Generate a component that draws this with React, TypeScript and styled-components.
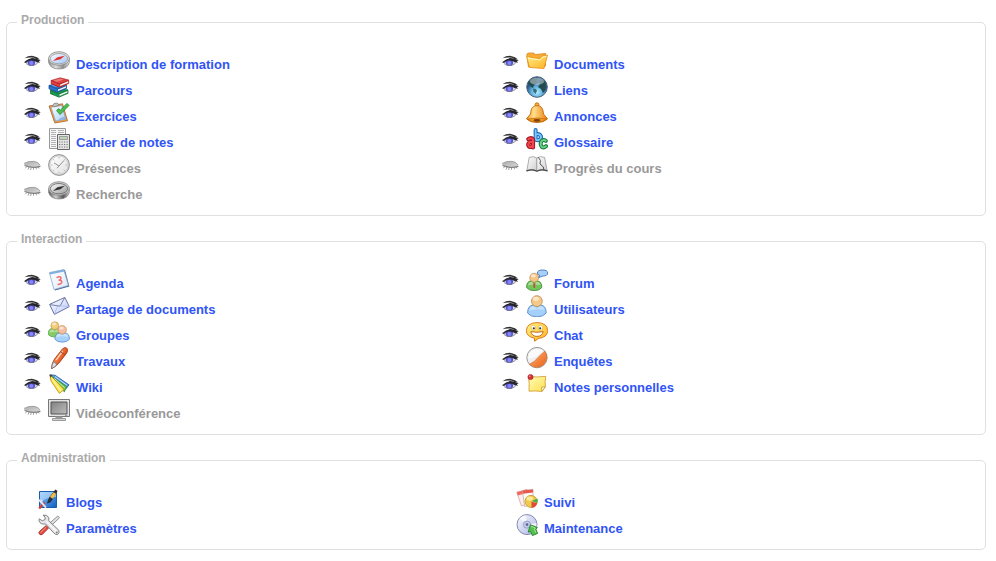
import React from "react";
import styled, { createGlobalStyle } from "styled-components";

const GlobalStyle = createGlobalStyle`
  body {
    margin: 0;
    background: #fff;
    font-family: "Liberation Sans", Arial, sans-serif;
  }
`;

const Page = styled.main`
  display: flex;
  flex-direction: column;
  gap: 16px;
  padding: 13px 10px 11px 6px;
`;

const Section = styled.fieldset`
  margin: 0;
  min-width: 0;
  padding: 16px 12px 11px 10px;
  border: 1px solid #e0e0e0;
  border-radius: 5px;
`;

const SectionTitle = styled.legend`
  padding: 0 4px 5px;
  font-size: 12px;
  font-weight: bold;
  line-height: 14px;
  color: #aaa;
`;

const ToolGrid = styled.div`
  display: grid;
  grid-template-columns: 1fr 1fr;
`;

const ToolList = styled.ul<{ $inset: number }>`
  margin: 0;
  padding: 0 0 0 ${(p) => p.$inset}px;
  list-style: none;
`;

const ToolRow = styled.li`
  display: flex;
  align-items: flex-start;
  height: 26px;
`;

const EyeButton = styled.button`
  flex: none;
  width: 17px;
  height: 12px;
  margin: 7px 7px 0 0;
  padding: 0;
  border: 0;
  background: none;
  cursor: pointer;
`;

const ToolLink = styled.a<{ $hidden: boolean }>`
  display: flex;
  gap: 6px;
  padding-top: 2px;
  font-size: 13px;
  font-weight: bold;
  line-height: 15px;
  color: ${(p) => (p.$hidden ? "#999" : "#3054f5")};
  text-decoration: none;
`;

const ToolName = styled.span`
  padding-top: 7px;
`;

const Drawing = styled.svg`
  display: block;
  flex: none;
`;

const Gradient = ({ id, from, to }: { id: string; from: string; to: string }) => (
  <linearGradient id={id} x1="0" y1="0" x2="1" y2="1">
    <stop offset="0" stopColor={from} />
    <stop offset="1" stopColor={to} />
  </linearGradient>
);

const OpenEye = () => (
  <Drawing width="17" height="12" viewBox="0 0 17 12" aria-hidden="true">
    <path d="M1.5 8Q7 3 14.5 6.5Q12 11 7.5 11Q4 11 1.5 8Z" fill="#dcdce8" />
    <circle cx="7.4" cy="7.4" r="3.7" fill="#5352c4" />
    <circle cx="7.4" cy="8" r="2" fill="#8486ff" />
    <path d="M.5 3.2Q4 .6 9 .9Q13.5 1.4 16 4.4L12.5 4Q9.5 2.4 6.5 2.6Q3 2.6.5 3.2Z" fill="#333" />
    <path d="M0 7.3Q4.5 3.4 8.5 3.1Q12.5 3.2 16.8 5.4L14.6 6.1L16.2 7.5L13.4 7.6Q9.7 4.7 6 5.6Q3.6 6.2 2 8L0 7.3Z" fill="#25252b" />
    <path d="M2 8.6Q7.5 12.6 13.5 8.4" fill="none" stroke="#888" strokeWidth=".8" />
  </Drawing>
);

const ClosedEye = () => (
  <Drawing width="17" height="12" viewBox="0 0 17 12" aria-hidden="true">
    <Gradient id="g-lid" from="#aaa" to="#ddd" />
    <path d="M0 5Q4 1.6 10.4 2.2Q15.5 3.4 16.5 7.2Q13 9.6 7 9Q2 8.6 0 5Z" fill="url(#g-lid)" />
    <path d="M0 4.4Q5 1.8 10 2.3Q14.5 3 16 6" fill="none" stroke="#999" strokeWidth=".8" />
    <path d="M.5 6.6Q8 9.6 16.4 7.4" fill="none" stroke="#808080" strokeWidth="1.1" />
    <path d="M2.5 7.5L1.5 9.2M5 8L4 10.6M7.2 8.5L6.6 11M9.5 8.5V10.8M12 8L12.5 10.3M14 7.7L15 9.4" fill="none" stroke="#888" strokeWidth=".8" />
  </Drawing>
);

const Compass = ({ face, light, dark, needle, id }: { face: string; light: string; dark: string; needle: string; id: string }) => (
  <>
    <Gradient id={id} from="#fff" to={face} />
    <linearGradient id={`${id}-side`}>
      <stop offset="0" stopColor={dark} />
      <stop offset=".35" stopColor={light} />
      <stop offset=".7" stopColor={dark} />
      <stop offset="1" stopColor={light} />
    </linearGradient>
    <path d="M.6 9V12.4Q2.2 19 11 19Q19.8 19 21.4 12.4V8Z" fill={`url(#${id}-side)`} stroke="#888" strokeWidth=".7" />
    <ellipse cx="11" cy="8.5" rx="10.4" ry="6.8" fill={light} stroke="#888" strokeWidth=".8" />
    <ellipse cx="11" cy="8.7" rx="8.7" ry="5.2" fill={`url(#${id})`} stroke={dark} strokeWidth=".7" />
    <path d="M4.8 11L9.5 7.2L16.8 5.7L12.5 9.2Z" fill={needle} />
  </>
);

const Book = ({ x, y, cover, edge }: { x: number; y: number; cover: string; edge: string }) => (
  <g transform={`translate(${x} ${y})`}>
    <path d="M0 2.6L8.5 6.2L17.5 2.6V5.6L8.5 9.4L0 6Z" fill={cover} stroke={edge} strokeWidth=".8" />
    <path d="M9 6.6L17 3.4V4.9L9 8.2Z" fill="#f4f4ee" />
    <path d="M0 2.6L9 0L17.5 2.2L8.5 6.2Z" fill={cover} stroke={edge} strokeWidth=".6" />
    <path d="M2 2.6L9 .7L12.5 1.7L6 4.1Z" fill="#fff" opacity=".3" />
  </g>
);

const Person = ({ x, y, scale, body, edge, head }: { x: number; y: number; scale: number; body: string; edge: string; head: string }) => (
  <g transform={`translate(${x} ${y}) scale(${scale})`}>
    <path d="M.4 17.5Q.4 10 6 9.6H13Q18.6 10 18.6 17.5Q16 21.2 9.5 21.2Q3 21.2.4 17.5Z" fill={body} stroke={edge} strokeWidth=".9" />
    <path d="M2 15Q3 10.8 6.5 10.8L9.5 13L12.5 10.8Q16 10.8 17 14.6Q10 13 2 15Z" fill="#fff" opacity=".4" />
    <circle cx="9.5" cy="5.8" r="5.3" fill={head} stroke="#bd8a4c" strokeWidth=".8" />
    <ellipse cx="8.5" cy="3.6" rx="3" ry="2" fill="#fff" opacity=".55" />
  </g>
);

const icons: Record<string, React.ReactNode> = {
  compass: <Compass id="g-compass" face="#9dc3fa" light="#dedede" dark="#8e8e8e" needle="#e0302a" />,
  search: <Compass id="g-search" face="#999" light="#cfcfcf" dark="#555" needle="#333" />,
  books: (
    <>
      <Book x={2.5} y={11.7} cover="#1c9a50" edge="#0b6a33" />
      <Book x={1} y={6.8} cover="#2a72cc" edge="#174d92" />
      <Book x={3.2} y={1.8} cover="#e0403e" edge="#a81c24" />
    </>
  ),
  exercises: (
    <>
      <Gradient id="g-paper" from="#fff" to="#a9d2f6" />
      <path d="M1 4L14.5 1.8L19.5 18.8L6.8 21Z" fill="#f0a04a" stroke="#a8642a" strokeWidth=".8" />
      <path d="M3 5.2L13.8 3.4L17.8 17.2L7.6 19Z" fill="url(#g-paper)" stroke="#7594bb" strokeWidth=".6" />
      <path d="M4.6 4L6 1.5L9.5 1L11 3.3L5.6 5Z" fill="#c4c4c4" stroke="#777" strokeWidth=".7" />
      <path d="M8.6 8.6L12 12.6L21 3.4L19 1.4L12.2 8.4L10.6 6.6Z" fill="#4cc24e" stroke="#1f8430" strokeWidth=".8" />
      <path d="M12.5 16L18 14L16.5 17.5L9 19Z" fill="#8fb6e4" />
    </>
  ),
  gradebook: (
    <>
      <path d="M1.5.5H17.5V20.5H1.5Z" fill="#f6f6f6" stroke="#999" />
      <path d="M3 2.5H8M10 2.5H16M3 4.5H8M10 4.5H16M3 6.5H8M3 8.5H8M3 10.5H8M3 12.5H8M3 14.5H8M3 16.5H8M3 18.5H8" stroke="#b2b2b2" />
      <path d="M9.5 6.5H21.5V21.5H9.5Z" fill="#e4e4e4" stroke="#666" />
      <path d="M11.5 8.5H19.5V11.5H11.5Z" fill="#bdd4b8" stroke="#888" strokeWidth=".7" />
      <path d="M11 14H20M11 16.5H20M11 19H20" stroke="#777" strokeWidth="1.2" strokeDasharray="1.2 1.3" />
    </>
  ),
  clock: (
    <>
      <Gradient id="g-clock" from="#fff" to="#e2e2e2" />
      <circle cx="11" cy="11" r="10.4" fill="#ddd" stroke="#888" strokeWidth=".9" />
      <circle cx="11" cy="11" r="9" fill="url(#g-clock)" stroke="#c4c4c4" strokeWidth=".6" />
      <path d="M11 3V4.5M11 17.5V19M3 11H4.5M17.5 11H19M5.3 5.3L6.3 6.3M15.7 15.7L16.7 16.7M16.7 5.3L15.7 6.3M5.3 16.7L6.3 15.7" stroke="#aaa" strokeWidth=".8" />
      <path d="M6 8.8L11 12L16 6.5M9 14.2L11 12" fill="none" stroke="#888" strokeWidth=".9" />
    </>
  ),
  folder: (
    <>
      <Gradient id="g-folder" from="#fff08a" to="#ffb020" />
      <path d="M2.5 17L.8 4.5Q1 3 3 3H7.5L9.5 4.6L19.5 3.4V16Z" fill="#f8ab35" stroke="#d98522" strokeWidth=".8" />
      <path d="M.6 6.6L13.5 8.6L16.5 5.6L21.5 5L18 18.6L3.5 17.4Z" fill="url(#g-folder)" stroke="#e58f1c" strokeWidth=".8" />
      <path d="M2 8L14 10L17 7L20.4 6.4" fill="none" stroke="#fffbd0" strokeWidth=".9" />
    </>
  ),
  globe: (
    <>
      <radialGradient id="g-globe" cx=".5" cy=".75">
        <stop offset="0" stopColor="#b5efff" />
        <stop offset=".6" stopColor="#5aa8d8" />
        <stop offset="1" stopColor="#2c5a86" />
      </radialGradient>
      <circle cx="11" cy="11" r="10.3" fill="url(#g-globe)" stroke="#4d6378" />
      <path d="M2 7L6 2.5L12 2L10 5L12 7L8 9L7 12L4 10ZM13 5L17 4L20 8L19.5 14L17 17L15 13L12 11L14 8Z" fill="#244c50" />
      <path d="M7 12.4L10 13L11 15L9.4 18L7.4 15.6Z" fill="#35707a" />
      <ellipse cx="11" cy="5.3" rx="7" ry="3.6" fill="#fff" opacity=".42" />
    </>
  ),
  bell: (
    <>
      <linearGradient id="g-bell">
        <stop offset="0" stopColor="#f39a1e" />
        <stop offset=".35" stopColor="#ffe08a" />
        <stop offset="1" stopColor="#ee7d0c" />
      </linearGradient>
      <circle cx="11" cy="2.8" r="2" fill="#ffae22" stroke="#b8640a" strokeWidth=".8" />
      <path d="M4.5 12Q4.8 3.6 11 3.6Q17.2 3.6 17.5 12L21.5 16.8Q18 20.6 11 20.6Q4 20.6 .5 16.8Z" fill="url(#g-bell)" stroke="#c06a10" strokeWidth=".9" />
      <path d="M1.2 17.2Q11 14.6 20.8 17.2Q17 20 11 20Q5 20 1.2 17.2Z" fill="#f59a20" stroke="#b8640a" strokeWidth=".7" />
      <ellipse cx="11" cy="18.3" rx="3.4" ry="1.4" fill="#7d4210" />
    </>
  ),
  glossary: (
    <g fill="none" strokeLinecap="round" strokeLinejoin="round">
      <path d="M9.6 2V11.6M9.6 7Q11.5 5.4 14 6.8Q15.8 8.6 14.4 11Q12.4 13 9.6 11.6" stroke="#1a66b4" strokeWidth="4" />
      <path d="M9.6 2V11.6M9.6 7Q11.5 5.4 14 6.8Q15.8 8.6 14.4 11Q12.4 13 9.6 11.6" stroke="#7ac8ff" strokeWidth="1.9" />
      <path d="M2.4 11.2Q5 9 7 11.4V19.4M7 14H3.5Q1 17 3.3 18.8Q6 19.4 7 17" stroke="#a5182a" strokeWidth="4.2" />
      <path d="M2.4 11.2Q5 9 7 11.4V19.4M7 14H3.5Q1 17 3.3 18.8Q6 19.4 7 17" stroke="#f2484c" strokeWidth="2" />
      <path d="M19.8 12.8Q17 10.9 15.2 13.6Q13.8 17 16 19Q18 20.2 20 18.2" stroke="#1b7a44" strokeWidth="4" />
      <path d="M19.8 12.8Q17 10.9 15.2 13.6Q13.8 17 16 19Q18 20.2 20 18.2" stroke="#6bd884" strokeWidth="1.8" />
    </g>
  ),
  openBook: (
    <>
      <Gradient id="g-book" from="#fff" to="#cfcfcf" />
      <path d="M3.2 3.4Q8 1.6 10.8 4V17Q6 14.6 .8 17Z" fill="url(#g-book)" stroke="#999" strokeWidth=".8" />
      <path d="M10.8 4Q14 1.6 18.6 3.4L21.2 17Q16 14.6 10.8 17Z" fill="url(#g-book)" stroke="#999" strokeWidth=".8" />
      <path d="M12.2 3.2L14.4 6.4L14 10L17.4 13L17.8 16" fill="none" stroke="#555" />
      <path d="M.4 17Q6 14.8 10.8 17.2Q16 14.8 21.6 17" fill="none" stroke="#444" strokeWidth="1.2" />
    </>
  ),
  agenda: (
    <>
      <Gradient id="g-agenda" from="#fff" to="#dcebfb" />
      <path d="M2.4 4L17 .8L21.4 17.4L7 21.6Z" fill="#466a9c" />
      <path d="M1.4 3.6L15.8.6L20.4 16.4L6 20.6Z" fill="url(#g-agenda)" stroke="#8fa5c5" strokeWidth=".8" />
      <path d="M1.4 3.6L15.8.6L16.3 2.6L2.1 5.6Z" fill="#7faee0" />
      <path d="M8.5 8.6Q12.6 6.8 13 9Q13 10.8 10.6 11.2Q14 11 13.8 13.4Q13.2 15.4 9.6 15.4" fill="none" stroke="#f26d6d" strokeWidth="1.5" />
    </>
  ),
  envelope: (
    <>
      <Gradient id="g-mail" from="#fff" to="#bccbfa" />
      <path d="M1.6 9.4L16.8 2.4L21.3 11.6L6.4 19.4Z" fill="url(#g-mail)" stroke="#6a74a6" />
      <path d="M1.9 9.6L12 11.2L16.6 2.8" fill="none" stroke="#6a74a6" strokeWidth=".9" />
      <path d="M6.5 19L9.6 11M21 11.5L12.4 10.8" fill="none" stroke="#a9b3dc" strokeWidth=".7" />
    </>
  ),
  group: (
    <>
      <Person x={-0.2} y={0.4} scale={0.74} body="#86cc62" edge="#449a30" head="#f3cc76" />
      <Person x={6.6} y={4.2} scale={0.8} body="#a6d1fa" edge="#5085be" head="#f6bd9e" />
    </>
  ),
  pen: (
    <>
      <linearGradient id="g-pen" x1="0" y1="0" x2="1" y2=".7">
        <stop offset=".2" stopColor="#ffb27c" />
        <stop offset=".7" stopColor="#e5531c" />
      </linearGradient>
      <path d="M3.6 21.6Q3.6 16.6 6.5 12L14.6 1.8Q17-.4 19 1.4Q20.4 3.4 18.6 6.2L10.8 16.2Q7.6 19.8 3.6 21.6Z" fill="url(#g-pen)" stroke="#a33f18" strokeWidth=".9" />
      <path d="M3.6 21.6Q3.8 17.8 5.6 14.6L9 17.4Q6.8 20 3.6 21.6Z" fill="#dfe2ec" stroke="#666" strokeWidth=".7" />
      <path d="M8.2 13L14.8 4.2" stroke="#ffe0c8" strokeWidth="1.2" />
      <path d="M13 5L17 8" stroke="#8c4d3c" />
    </>
  ),
  wiki: (
    <g strokeWidth=".8">
      <path d="M2 2L7 2.2L21 11.8L18.4 15.4L5 6Z" fill="#4f9ae8" stroke="#2b5b9a" />
      <path d="M2 2L6 5L18.6 13.4L16.4 18.8L5 8Z" fill="#5fc445" stroke="#2f882c" />
      <path d="M2 2L6.5 6.4L16 16.6L11.4 20.4L3 8Z" fill="#ffe650" stroke="#b38a12" />
      <path d="M4 6L13 18M6.4 5.4L16.8 15M7 3.6L19 12.4" stroke="#fff" strokeWidth=".9" opacity=".8" />
      <path d="M1.4 1.4L4.6 1.8L2.4 4.8Z" fill="#444" />
    </g>
  ),
  monitor: (
    <>
      <Gradient id="g-screen" from="#828282" to="#bdbdbd" />
      <path d="M.5.5H21.5V17.5H.5Z" fill="#e4e4e4" stroke="#777" />
      <path d="M3 3H19V15H3Z" fill="url(#g-screen)" stroke="#555" />
      <path d="M7.5 17.5H14.5V19.5H7.5Z" fill="#999" />
      <path d="M4.5 19.5H17.5V21.5H4.5Z" fill="#d4d4d4" stroke="#888" strokeWidth=".8" />
      <path d="M17 16.3H19.5" stroke="#777" strokeWidth=".8" />
    </>
  ),
  forum: (
    <>
      <Person x={0.2} y={3.8} scale={0.84} body="#73c65b" edge="#31832a" head="#f5c586" />
      <path d="M7.2 13.6L8.2 14.8L9.4 13.6L9 19H7.6Z" fill="#c9483c" />
      <path d="M11.4 4Q11.4 1 16.6 1Q21.7 1 21.7 4Q21.7 7 16.6 7.1L12.8 8.6L13.6 6.3Q11.4 5.6 11.4 4Z" fill="#a9d0fb" stroke="#3f74ae" strokeWidth=".9" />
    </>
  ),
  user: <Person x={1.2} y={0.2} scale={1.02} body="#a4d0fb" edge="#5c8cc4" head="#f4c888" />,
  chat: (
    <>
      <Gradient id="g-chat" from="#fff78a" to="#ffb31a" />
      <path d="M11 1.6Q21.6 2 21.6 9.5Q21.4 16.6 12.6 17.4L8.6 20.2L8.4 17.2Q.4 15.6.4 9.5Q.8 2 11 1.6Z" fill="url(#g-chat)" stroke="#dd7a1c" />
      <ellipse cx="7.4" cy="6.8" rx="2.2" ry="2.6" fill="#fff" stroke="#d9a02c" strokeWidth=".5" />
      <ellipse cx="14.6" cy="6.8" rx="2.2" ry="2.6" fill="#fff" stroke="#d9a02c" strokeWidth=".5" />
      <circle cx="7.8" cy="7.3" r="1.1" fill="#333" />
      <circle cx="14.2" cy="7.3" r="1.1" fill="#333" />
      <path d="M4.8 10.6Q11 12 17.2 10.6Q16 15.4 11 15.4Q6 15.4 4.8 10.6Z" fill="#fff" stroke="#b8641c" strokeWidth=".9" />
    </>
  ),
  survey: (
    <>
      <Gradient id="g-survey" from="#f9b27a" to="#ee6012" />
      <circle cx="11" cy="10.6" r="10.2" fill="#efefef" stroke="#999" />
      <path d="M18.8 4.2A10.1 10.1 0 0 1 3.4 17.2Q9 14.8 12 10.4Q15 7.4 18.8 4.2Z" fill="url(#g-survey)" stroke="#d3692b" strokeWidth=".6" />
      <path d="M2.2 12Q2 4 10 2.3Q15 1.5 17.5 3.5L10.5 9.5Z" fill="#fff" opacity=".7" />
    </>
  ),
  note: (
    <>
      <Gradient id="g-note" from="#fffcb4" to="#ffdf52" />
      <path d="M2.5 3.6Q11 4.4 19.8 3.4Q18.6 9 19.4 13.6L16 18.4Q9 17.6 3 18.2Q3.6 10 2.5 3.6Z" fill="url(#g-note)" stroke="#d2a23a" strokeWidth=".9" />
      <path d="M19.4 13.6L15.4 14.2L16 18.4Z" fill="#fffbd2" stroke="#bd8d25" strokeWidth=".7" />
      <circle cx="4.5" cy="4" r="2.6" fill="#d8323a" stroke="#a3202a" strokeWidth=".6" />
      <circle cx="3.8" cy="3.2" r=".8" fill="#ff9999" />
    </>
  ),
  blog: (
    <>
      <Gradient id="g-blog" from="#8fc8ff" to="#0d5cc0" />
      <path d="M1.5 3.5H18.5V19.5H1.5Z" fill="url(#g-blog)" stroke="#1a5ca8" />
      <path d="M2 4H18V9Q10 9 2 14Z" fill="#d4ebff" opacity=".5" />
      <path d="M17.4 1.4L19.6 3L14.6 10.6L11.8 8.8Z" fill="#2b2d30" />
      <path d="M15.6 4.2L18 5.8L14.8 10.8L12 9Z" fill="#f5bc3c" />
      <path d="M11.4 8.8L15 11L12.4 14.4L8.8 15.6Z" fill="#26303c" />
      <path d="M6.6 14.6L1.2 20.6" stroke="#d04038" strokeWidth="2.2" />
      <path d="M.6 11.6L2.6 13.8L4.4 12.2M3 13.8L8 19.6" fill="none" stroke="#e6e6ee" strokeWidth="1.8" />
    </>
  ),
  settings: (
    <>
      <path d="M19.8 2L21.5 3.8L12.4 12.4L10.2 10.4Z" fill="#e2e2e2" stroke="#777" strokeWidth=".8" />
      <path d="M8.2 11.6L10.6 14L4.2 20.6Q1.8 21.6.8 19Q.8 17.6 3.2 15.8Z" fill="#e04c42" stroke="#9a2a28" strokeWidth=".8" />
      <path d="M2.5 18.6L8.4 13" stroke="#ff9a8b" />
      <path d="M5 1.2Q9 .4 10.8 3.5L10.8 6.8L20.8 16.2Q22 19 19.5 20.6Q17.7 21 15.6 18.8L7.6 10Q2.5 10.8 1 6.9L1.2 4.8L4.3 6.8L7.2 5.4L7 3Z" fill="#e6e6ea" stroke="#777" strokeWidth=".9" />
      <path d="M8.6 7.6L18 17" stroke="#fff" strokeWidth="1.2" />
      <circle cx="18.8" cy="18.4" r="1" fill="#888" />
    </>
  ),
  tracking: (
    <>
      <path d="M.8 4.2L11 1.4L15 15L5.4 18Z" fill="#fbeeec" stroke="#d4a8a4" strokeWidth=".8" />
      <path d="M.8 4.2L11 1.4L12 4.6L1.8 7.4Z" fill="#ef6a60" />
      <path d="M6.4 2.6L17 1.4V16L8.6 18.6Z" fill="#fbfaf8" stroke="#c9aca8" strokeWidth=".8" />
      <path d="M6.4 2.6L17 1.4V4.6L6.8 5.8Z" fill="#e8584f" />
      <circle cx="15" cy="13.4" r="6" fill="#efcb4c" stroke="#bf9426" strokeWidth=".8" />
      <ellipse cx="13.8" cy="10.6" rx="3.2" ry="2.2" fill="#fff3b0" opacity=".8" />
      <path d="M15.6 13L21.4 10.6Q22.2 13 21.2 15Z" fill="#4eae4d" />
      <path d="M15.4 13.8L21.4 15.2Q19.6 19.8 15.6 19.8Z" fill="#e04a38" />
    </>
  ),
  disc: (
    <>
      <Gradient id="g-disc" from="#fafaff" to="#aab4e4" />
      <circle cx="11" cy="10.6" r="10" fill="url(#g-disc)" stroke="#858bb0" />
      <path d="M11 10.6L3.4 4.4Q6 1.4 10 1.2ZM11 10.6L20.4 9V13Z" fill="#fff" opacity=".7" />
      <circle cx="11" cy="10.6" r="3.6" fill="#c4c9ef" stroke="#8d94c4" strokeWidth=".8" />
      <circle cx="11" cy="10.6" r="1.3" fill="#5a6188" />
      <path d="M14.4 10.8L21.4 13.6L19.8 15L21.6 19.4L16.4 21.6L14.6 17.4L12.2 18.2Z" fill="#55c04c" stroke="#1f8229" strokeWidth=".9" />
      <path d="M14.8 12.2L19.4 14L18.4 15.2L19.8 18.6" fill="none" stroke="#b2eaa4" strokeWidth=".9" />
    </>
  ),
};

type Tool = { name: string; icon: string; hidden?: boolean };
type Group = { title: string; admin?: boolean; columns: Tool[][] };

const groups: Group[] = [
  {
    title: "Production",
    columns: [
      [
        { name: "Description de formation", icon: "compass" },
        { name: "Parcours", icon: "books" },
        { name: "Exercices", icon: "exercises" },
        { name: "Cahier de notes", icon: "gradebook" },
        { name: "Présences", icon: "clock", hidden: true },
        { name: "Recherche", icon: "search", hidden: true },
      ],
      [
        { name: "Documents", icon: "folder" },
        { name: "Liens", icon: "globe" },
        { name: "Annonces", icon: "bell" },
        { name: "Glossaire", icon: "glossary" },
        { name: "Progrès du cours", icon: "openBook", hidden: true },
      ],
    ],
  },
  {
    title: "Interaction",
    columns: [
      [
        { name: "Agenda", icon: "agenda" },
        { name: "Partage de documents", icon: "envelope" },
        { name: "Groupes", icon: "group" },
        { name: "Travaux", icon: "pen" },
        { name: "Wiki", icon: "wiki" },
        { name: "Vidéoconférence", icon: "monitor", hidden: true },
      ],
      [
        { name: "Forum", icon: "forum" },
        { name: "Utilisateurs", icon: "user" },
        { name: "Chat", icon: "chat" },
        { name: "Enquêtes", icon: "survey" },
        { name: "Notes personnelles", icon: "note" },
      ],
    ],
  },
  {
    title: "Administration",
    admin: true,
    columns: [
      [
        { name: "Blogs", icon: "blog" },
        { name: "Paramètres", icon: "settings" },
      ],
      [
        { name: "Suivi", icon: "tracking" },
        { name: "Maintenance", icon: "disc" },
      ],
    ],
  },
];

export default function App() {
  return (
    <>
      <GlobalStyle />
      <Page>
        {groups.map((group) => (
          <Section key={group.title}>
            <SectionTitle>{group.title}</SectionTitle>
            <ToolGrid>
              {group.columns.map((tools, index) => (
                <ToolList key={index} $inset={group.admin ? 21 : 7}>
                  {tools.map((tool) => (
                    <ToolRow key={tool.name}>
                      {!group.admin && (
                        <EyeButton
                          type="button"
                          aria-label={`${tool.hidden ? "Afficher" : "Masquer"} ${tool.name}`}
                        >
                          {tool.hidden ? <ClosedEye /> : <OpenEye />}
                        </EyeButton>
                      )}
                      <ToolLink href="#" $hidden={!!tool.hidden}>
                        <Drawing width="22" height="22" viewBox="0 0 22 22" aria-hidden="true">
                          {icons[tool.icon]}
                        </Drawing>
                        <ToolName>{tool.name}</ToolName>
                      </ToolLink>
                    </ToolRow>
                  ))}
                </ToolList>
              ))}
            </ToolGrid>
          </Section>
        ))}
      </Page>
    </>
  );
}
